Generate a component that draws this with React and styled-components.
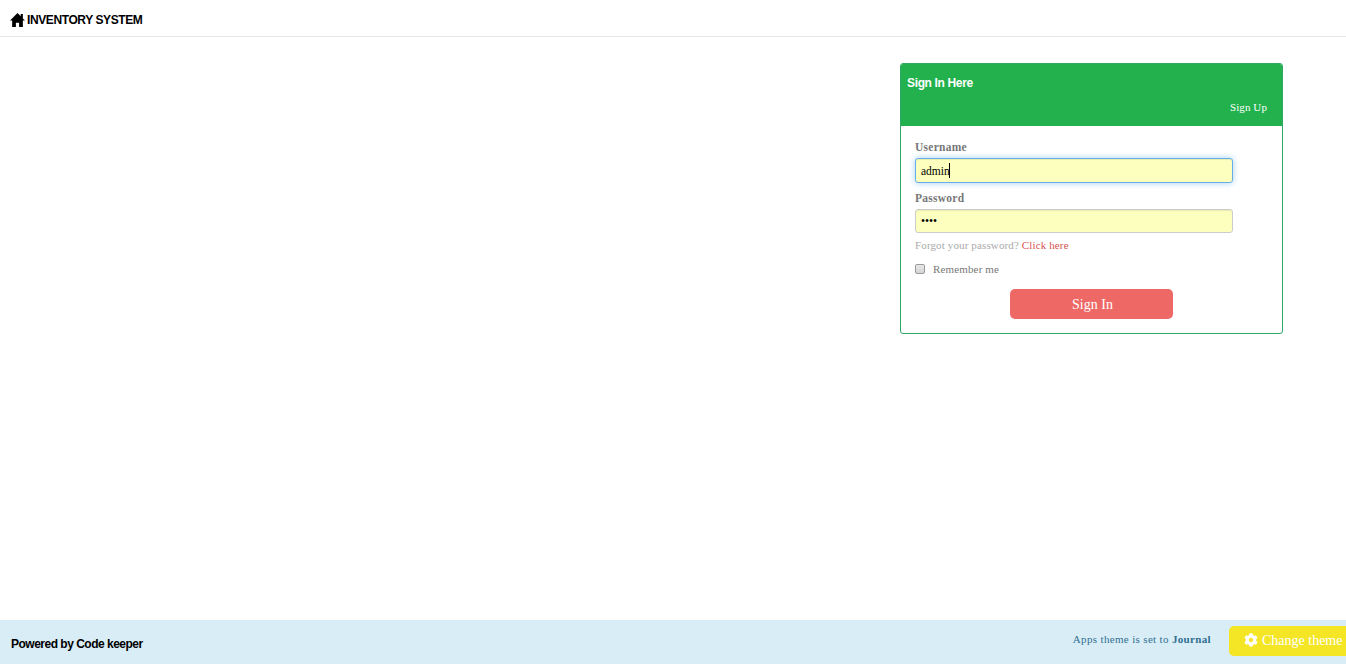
import React from 'react';
import styled, { createGlobalStyle } from 'styled-components';
import { FaCog } from 'react-icons/fa';

const HomeIcon = () => (
  <svg width="15" height="14" viewBox="0 0 14 13" fill="currentColor">
    <path d="M7 0 L10 3 V1 H12 V5 L14 7 H12 V13 H8.5 V9 H5.5 V13 H2 V7 H0 Z" />
  </svg>
);

const App = () => {
  return (
    <Page>
      <GlobalStyle />
      <Navbar>
        <HomeIcon />
        <Brand>INVENTORY SYSTEM</Brand>
      </Navbar>

      <Main>
        <Panel>
          <PanelHeader>
            <PanelTitle>Sign In Here</PanelTitle>
            <SignUpLink>Sign Up</SignUpLink>
          </PanelHeader>
          <PanelBody>
            <Label>Username</Label>
            <InputWrap>
              <Input $focused type="text" defaultValue="admin" />
              <Caret />
            </InputWrap>
            <Label>Password</Label>
            <InputWrap $last>
              <Input $short type="password" defaultValue="1234" />
            </InputWrap>
            <ForgotText>
              Forgot your password? <ClickHere>Click here</ClickHere>
            </ForgotText>
            <RememberRow>
              <CheckBox />
              <span>Remember me</span>
            </RememberRow>
            <SignInButton>Sign In</SignInButton>
          </PanelBody>
        </Panel>
      </Main>

      <Footer>
        <Powered>Powered by Code keeper</Powered>
        <FooterRight>
          <ThemeNote>
            Apps theme is set to <b>Journal</b>
          </ThemeNote>
          <ThemeButton>
            <GearIcon size={14} />
            Change theme
          </ThemeButton>
        </FooterRight>
      </Footer>
    </Page>
  );
};

const GlobalStyle = createGlobalStyle`
  html, body {
    margin: 0;
    padding: 0;
    background: #fff;
    font-family: "Liberation Serif", "Times New Roman", serif;
  }
`;

const Page = styled.div`
  display: flex;
  flex-direction: column;
  height: 664px;
  overflow: hidden;
`;

const Navbar = styled.header`
  display: flex;
  align-items: center;
  gap: 2px;
  height: 36px;
  padding: 3px 0 0 10px;
  box-sizing: border-box;
  box-shadow: 0 1px 0 #e7e7e7;
  color: #000;
`;

const Brand = styled.span`
  font-family: "Liberation Sans", Arial, sans-serif;
  font-size: 12px;
  font-weight: 700;
  letter-spacing: -0.4px;
`;

const Main = styled.main`
  flex: 1;
  display: flex;
  justify-content: flex-end;
  align-items: flex-start;
  padding: 27px 63px 0 0;
`;

const Panel = styled.section`
  width: 383px;
  box-sizing: border-box;
  border: 1px solid #2fa866;
  border-radius: 3px;
  background: #fff;
  overflow: hidden;
`;

const PanelHeader = styled.div`
  display: flex;
  flex-direction: column;
  height: 62px;
  box-sizing: border-box;
  padding: 12px 15px 0 6px;
  background: #22b14c;
  color: #fff;
`;

const PanelTitle = styled.h3`
  margin: 0;
  font-family: "Liberation Sans", Arial, sans-serif;
  font-size: 12px;
  font-weight: 700;
  line-height: 15px;
  letter-spacing: -0.35px;
`;

const SignUpLink = styled.a`
  align-self: flex-end;
  margin-top: 9px;
  font-size: 11px;
  line-height: 14px;
  letter-spacing: 0.1px;
`;

const PanelBody = styled.div`
  display: flex;
  flex-direction: column;
  align-items: flex-start;
  padding: 14px;
`;

const Label = styled.label`
  font-size: 11.5px;
  font-weight: 700;
  line-height: 14px;
  letter-spacing: 0.25px;
  color: #777;
  margin-bottom: 4px;
`;

const InputWrap = styled.div`
  position: relative;
  width: 318px;
  margin-bottom: ${(props) => (props.$last ? '5px' : '8px')};
`;

const Input = styled.input`
  display: block;
  width: 100%;
  height: ${(props) => (props.$short ? '24px' : '25px')};
  box-sizing: border-box;
  padding: 0 5px;
  border: 1px solid ${(props) => (props.$focused ? '#66afe9' : '#ccc')};
  border-radius: 3px;
  outline: none;
  background: #fcffbe;
  color: #000;
  font-family: "Liberation Serif", serif;
  font-size: 11.5px;
  box-shadow: ${(props) =>
    props.$focused
      ? 'inset 0 1px 1px rgba(0,0,0,.075), 0 0 6px rgba(102,175,233,.6)'
      : 'inset 0 1px 1px rgba(0,0,0,.075)'};
`;

const Caret = styled.span`
  position: absolute;
  left: 34px;
  top: 5px;
  width: 1px;
  height: 15px;
  background: #000;
`;

const ForgotText = styled.p`
  margin: 0;
  font-size: 11px;
  line-height: 14px;
  letter-spacing: 0.13px;
  color: #aaa;
`;

const ClickHere = styled.a`
  color: #d9534f;
`;

const RememberRow = styled.div`
  display: flex;
  align-items: center;
  gap: 8px;
  margin-top: 10px;
  font-size: 11px;
  line-height: 14px;
  letter-spacing: 0.15px;
  color: #777;
`;

const CheckBox = styled.span`
  width: 10px;
  height: 10px;
  box-sizing: border-box;
  border: 1px solid #999;
  border-radius: 2px;
  background: linear-gradient(#e8e8e8, #d4d4d4);
`;

const SignInButton = styled.button`
  align-self: center;
  width: 163px;
  height: 30px;
  margin-top: 13px;
  padding: 2px 0 0 2px;
  border: 0;
  border-radius: 5px;
  background: #ee6966;
  color: #fff;
  font-family: "Liberation Serif", serif;
  font-size: 14px;
`;

const Footer = styled.footer`
  display: flex;
  align-items: center;
  justify-content: space-between;
  height: 44px;
  padding-left: 11px;
  background: #d9edf7;
`;

const Powered = styled.span`
  font-family: "Liberation Sans", Arial, sans-serif;
  font-size: 12px;
  font-weight: 700;
  letter-spacing: -0.5px;
  color: #000;
  padding-top: 4px;
`;

const FooterRight = styled.div`
  display: flex;
  align-items: center;
  gap: 18px;
  padding-bottom: 2px;
`;

const ThemeNote = styled.span`
  font-size: 11px;
  letter-spacing: 0.34px;
  color: #31708f;
  padding-bottom: 4px;
`;

const ThemeButton = styled.button`
  display: flex;
  align-items: center;
  gap: 4px;
  width: 117px;
  height: 30px;
  padding: 0 0 0 15px;
  border: 0;
  border-radius: 5px 0 0 5px;
  background: #f5e625;
  color: #fff;
  font-family: "Liberation Serif", serif;
  font-size: 14px;
  white-space: nowrap;
`;

const GearIcon = styled(FaCog)`
  margin-bottom: 2px;
`;

export default App;
